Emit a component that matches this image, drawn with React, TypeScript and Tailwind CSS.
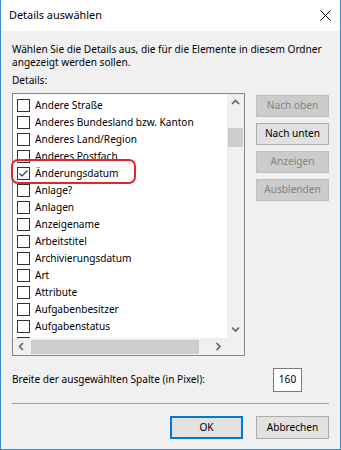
import React from "react";

const items = [
  "Andere Straße",
  "Anderes Bundesland bzw. Kanton",
  "Anderes Land/Region",
  "Anderes Postfach",
  "Änderungsdatum",
  "Anlage?",
  "Anlagen",
  "Anzeigename",
  "Arbeitstitel",
  "Archivierungsdatum",
  "Art",
  "Attribute",
  "Aufgabenbesitzer",
  "Aufgabenstatus",
  "",
];

const Chevron = ({ dir }: { dir: "up" | "down" | "left" | "right" }) => {
  const pts = {
    up: "1,5 4.5,1.5 8,5",
    down: "1,1.5 4.5,5 8,1.5",
    left: "5,1 1.5,4.5 5,8",
    right: "1.5,1 5,4.5 1.5,8",
  }[dir];
  const vertical = dir === "up" || dir === "down";
  return (
    <svg
      width={vertical ? 9 : 7}
      height={vertical ? 7 : 9}
      viewBox={vertical ? "0 0 9 7" : "0 0 7 9"}
    >
      <polyline points={pts} fill="none" stroke="#606060" strokeWidth="1.6" />
    </svg>
  );
};

const SideButton = ({ label, enabled }: { label: string; enabled?: boolean }) => (
  <div
    className={`flex h-[22px] w-[73px] items-center justify-center border ${
      enabled
        ? "border-[#adadad] bg-[#e1e1e1] text-black"
        : "border-[#bfbfbf] bg-[#cccccc] text-[#838383]"
    }`}
  >
    {label}
  </div>
);

export default function App() {
  return (
    <div
      className="relative flex h-[450px] w-[341px] flex-col border-x border-b border-[#3b88cc] bg-[#f0f0f0] text-[10.1px] text-black"
      style={{ fontFamily: '"Noto Sans", sans-serif' }}
    >
      {/* Titelleiste */}
      <div className="flex h-[31px] items-center justify-between bg-white pl-[8px] pr-[9px]">
        <span className="text-[10.9px]">Details auswählen</span>
        <svg width="11" height="11" viewBox="0 0 11 11">
          <path d="M0.5 0.5 L10.5 10.5 M10.5 0.5 L0.5 10.5" stroke="#000" strokeWidth="1" />
        </svg>
      </div>

      <div className="flex flex-1 flex-col px-[11px]">
        <p className="mt-[12px] leading-[13px]">
          Wählen Sie die Details aus, die für die Elemente in diesem Ordner
          <br />
          angezeigt werden sollen.
        </p>
        <p className="mt-[5px] leading-[13px]">Details:</p>

        <div className="mt-[6px] flex gap-[11px]">
          {/* Liste */}
          <div className="flex h-[263px] w-[233px] flex-col border border-[#828790] bg-white">
            <div className="flex h-[244px]">
              <div className="flex-1 overflow-hidden pt-[3px]">
                {items.map((item, i) => (
                  <div key={i} className="flex h-[17px] items-center pl-[4px]">
                    <div className="flex h-[13px] w-[13px] items-center justify-center border border-[#333333] bg-white">
                      {i === 4 && (
                        <svg width="11" height="11" viewBox="0 0 11 11">
                          <polyline
                            points="1.5,5.5 4,8 9.5,2.5"
                            fill="none"
                            stroke="#333"
                            strokeWidth="1.1"
                          />
                        </svg>
                      )}
                    </div>
                    {item && (
                      <span className="ml-[5px] whitespace-nowrap leading-[17px]">{item}</span>
                    )}
                  </div>
                ))}
              </div>
              <div className="flex w-[17px] flex-col bg-[#f0f0f0]">
                <div className="flex h-[17px] items-center justify-center">
                  <Chevron dir="up" />
                </div>
                <div className="flex-1 pt-[17px]">
                  <div className="mx-[1px] h-[19px] bg-[#cdcdcd]" />
                </div>
                <div className="flex h-[17px] items-center justify-center">
                  <Chevron dir="down" />
                </div>
              </div>
            </div>
            <div className="flex h-[17px] bg-[#f0f0f0]">
              <div className="flex w-[17px] items-center justify-center">
                <Chevron dir="left" />
              </div>
              <div className="flex flex-1 items-center pl-[1px]">
                <div className="h-[14px] w-[168px] bg-[#cdcdcd]" />
              </div>
              <div className="flex w-[17px] items-center justify-center">
                <Chevron dir="right" />
              </div>
              <div className="w-[17px] bg-[#f0f0f0]" />
            </div>
          </div>

          {/* Schaltflächen rechts */}
          <div className="flex flex-col gap-[6px] pt-[2px]">
            <SideButton label="Nach oben" />
            <SideButton label="Nach unten" enabled />
            <SideButton label="Anzeigen" />
            <SideButton label="Ausblenden" />
          </div>
        </div>

        <div className="mt-[12px] flex items-center justify-between">
          <span>Breite der ausgewählten Spalte (in Pixel):</span>
          <div className="mr-[27px] flex h-[24px] w-[29px] items-center justify-center border border-[#7a7a7a] bg-white">
            160
          </div>
        </div>

        <div className="mt-[11px] border-t border-[#a0a0a0]" />

        <div className="mt-[12px] flex justify-end gap-[13px]">
          <div className="flex h-[23px] w-[73px] items-center justify-center border-2 border-[#0078d7] bg-[#e1e1e1]">
            OK
          </div>
          <div className="flex h-[23px] w-[73px] items-center justify-center border border-[#adadad] bg-[#e1e1e1]">
            Abbrechen
          </div>
        </div>
      </div>

      {/* rote Markierung */}
      <div className="absolute left-[10px] top-[159px] h-[25px] w-[125px] rounded-[7px] border-2 border-[#e0262c]" />
    </div>
  );
}
